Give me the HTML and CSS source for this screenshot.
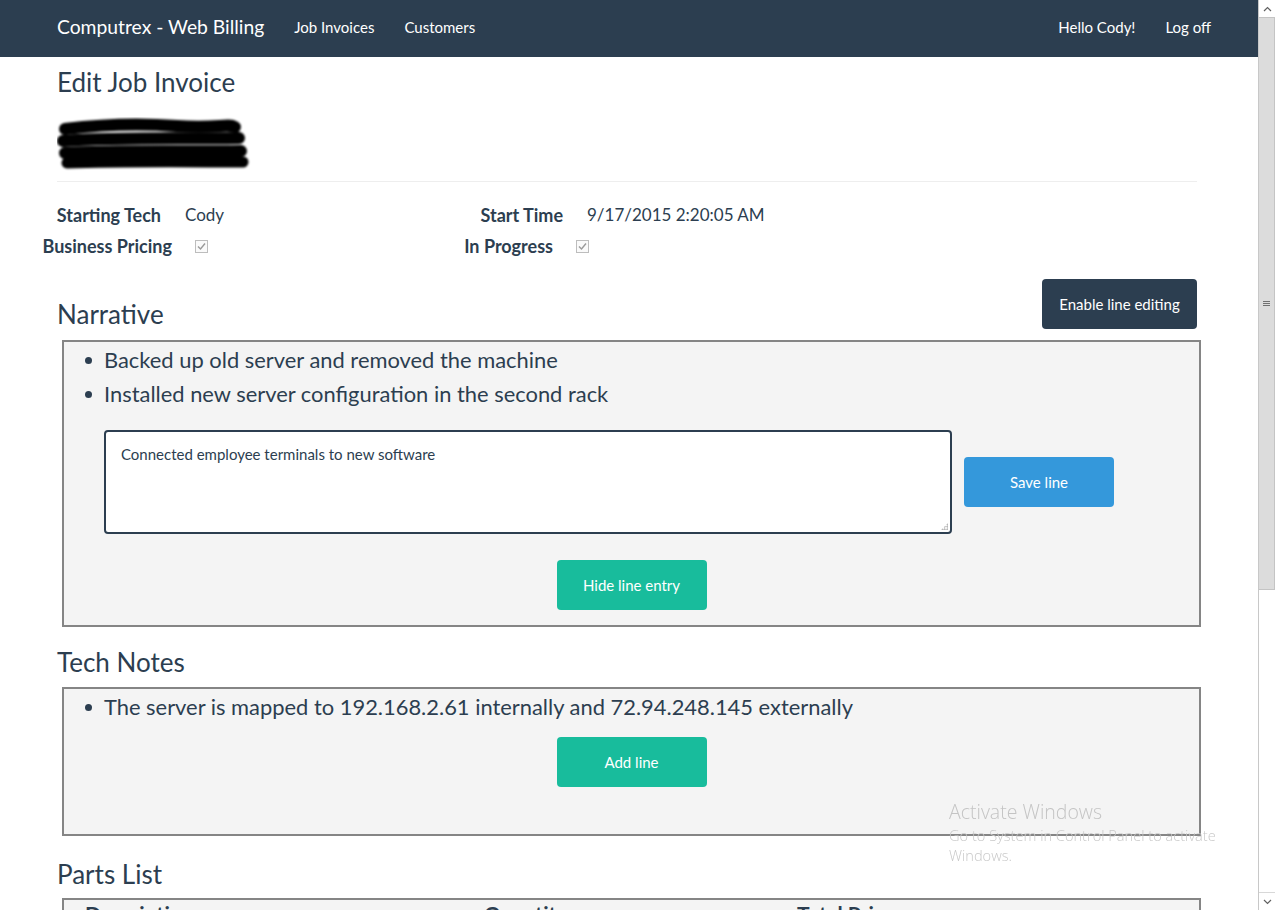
FILE: index.html
```html
<!DOCTYPE html>
<html>
<head>
<meta charset="utf-8">
<title>Edit Job Invoice</title>
<link rel="stylesheet" href="styles.css">
</head>
<body>
<div class="app">
  <div class="page">
    <nav class="navbar">
      <div class="nav-inner">
        <a class="brand">Computrex - Web Billing</a>
        <a class="nav-link">Job Invoices</a>
        <a class="nav-link">Customers</a>
        <span class="nav-spacer"></span>
        <a class="nav-link">Hello Cody!</a>
        <a class="nav-link">Log off</a>
      </div>
    </nav>
    <main class="container">
      <h2 class="page-title">Edit Job Invoice</h2>
      <div class="redacted">
        <svg width="200" height="60" viewBox="0 0 200 60">
          <defs><filter id="b" x="-10%" y="-30%" width="120%" height="160%"><feGaussianBlur stdDeviation="1.2"/></filter></defs>
          <g stroke="#000" stroke-linecap="round" fill="none" filter="url(#b)">
            <path d="M8 12 C 40 8, 80 6, 120 9 S 170 6, 178 10" stroke-width="12"/>
            <path d="M6 24 C 60 20, 120 22, 182 21" stroke-width="12"/>
            <path d="M8 36 C 60 33, 130 35, 184 34" stroke-width="12"/>
            <path d="M10 46 C 70 44, 140 45, 186 45" stroke-width="11"/>
          </g>
        </svg>
      </div>
      <hr class="divider">
      <div class="info-row info-row--first">
        <span class="info-label">Starting Tech</span>
        <span class="info-value">Cody</span>
        <span class="info-label">Start Time</span>
        <span class="info-value">9/17/2015 2:20:05 AM</span>
      </div>
      <div class="info-row info-row--second">
        <span class="info-label">Business Pricing</span>
        <span class="info-value"><span class="checkbox"><svg width="9" height="9" viewBox="0 0 9 9"><path d="M1 4.6 L3.5 7 L8 1.5" fill="none" stroke="#9a9a9a" stroke-width="1.4"/></svg></span></span>
        <span class="info-label">In Progress</span>
        <span class="info-value"><span class="checkbox"><svg width="9" height="9" viewBox="0 0 9 9"><path d="M1 4.6 L3.5 7 L8 1.5" fill="none" stroke="#9a9a9a" stroke-width="1.4"/></svg></span></span>
      </div>

      <div class="section-head">
        <h3 class="section-title">Narrative</h3>
        <button class="btn btn-primary">Enable line editing</button>
      </div>
      <section class="line-box line-box--narrative">
        <ul class="lines">
          <li>Backed up old server and removed the machine</li>
          <li>Installed new server configuration in the second rack</li>
        </ul>
        <div class="entry-row">
          <div class="textarea">Connected employee terminals to new software<span class="resize-grip"></span></div>
          <button class="btn btn-info">Save line</button>
        </div>
        <div class="center-row">
          <button class="btn btn-success">Hide line entry</button>
        </div>
      </section>

      <div class="section-head section-head--plain">
        <h3 class="section-title">Tech Notes</h3>
      </div>
      <section class="line-box line-box--notes">
        <ul class="lines">
          <li>The server is mapped to 192.168.2.61 internally and 72.94.248.145 externally</li>
        </ul>
        <div class="center-row center-row--tight">
          <button class="btn btn-success">Add line</button>
        </div>
      </section>

      <div class="section-head section-head--plain section-head--parts">
        <h3 class="section-title">Parts List</h3>
      </div>
      <section class="line-box line-box--parts">
        <div class="parts-header">
          <span class="col-desc">Description</span>
          <span class="col-qty">Quantity</span>
          <span class="col-price">Total Price</span>
        </div>
      </section>
    </main>
  </div>
  <div class="scrollbar">
    <div class="sb-arrow"><svg width="9" height="6" viewBox="0 0 9 6"><path d="M1 5 L4.5 1.5 L8 5" fill="none" stroke="#606060" stroke-width="1.2"/></svg></div>
    <div class="sb-thumb"><span class="grip"></span></div>
    <div class="sb-track"></div>
    <div class="sb-arrow"><svg width="9" height="6" viewBox="0 0 9 6"><path d="M1 1 L4.5 4.5 L8 1" fill="none" stroke="#606060" stroke-width="1.2"/></svg></div>
  </div>
</div>
<div class="watermark">
  <div class="wm-title">Activate Windows</div>
  <div class="wm-sub">Go to System in Control Panel to activate<br>Windows.</div>
</div>
</body>
</html>
```

FILE: styles.css
```css
html, body {
  margin: 0;
  padding: 0;
  overflow: hidden;
  height: 910px;
}
body {
  font-family: Lato, "Open Sans", "Liberation Sans", sans-serif;
  color: #2c3e50;
  background: #fff;
}
.app {
  display: flex;
  height: 910px;
}
.page {
  width: 1258px;
  height: 910px;
  overflow: hidden;
  flex: none;
}

/* navbar */
.navbar {
  background: #2c3e50;
  height: 57px;
}
.nav-inner {
  width: 1170px;
  margin: 0 auto;
  box-sizing: border-box;
  padding: 0 3px 4px 13px;
  display: flex;
  align-items: center;
  height: 57px;
  gap: 30px;
}
.navbar a {
  color: #fff;
  text-decoration: none;
}
.brand {
  font-size: 19.3px;
}
.nav-link {
  font-size: 15px;
}
.nav-spacer {
  flex: 1;
}

/* container */
.container {
  width: 1170px;
  margin: 0 auto;
  box-sizing: border-box;
  padding: 0 17px 0 13px;
}
.page-title {
  font-size: 26px;
  font-weight: 400;
  line-height: 29px;
  margin: 11px 0 0 0;
}
.redacted {
  margin-top: 20px;
  height: 55px;
  line-height: 0;
}
.divider {
  border: 0;
  border-top: 1px solid #eee;
  margin: 9px 0 0 0;
}

/* info rows */
.info-row {
  display: grid;
  align-items: center;
  height: 31px;
  margin-left: -18px;
  font-size: 17px;
}
.info-row--first {
  margin-top: 17px;
  grid-template-columns: 122px 224px 178px auto;
}
.info-row--second {
  grid-template-columns: 133px 223px 158px auto;
}
.info-label {
  font-weight: 700;
  font-size: 18px;
  text-align: right;
  white-space: nowrap;
}
.info-value {
  padding-left: 24px;
  white-space: nowrap;
  display: flex;
  align-items: center;
}
.info-row--second .info-value {
  padding-left: 23px;
}
.checkbox {
  width: 11px;
  height: 11px;
  border: 1px solid #bdbdbd;
  background: #fafafa;
  display: inline-flex;
  align-items: center;
  justify-content: center;
  margin-top: 1px;
}

/* sections */
.section-head {
  display: flex;
  justify-content: space-between;
  align-items: flex-end;
  margin-top: 18px;
  margin-bottom: 11px;
}
.section-head--plain {
  margin-top: 21px;
  margin-bottom: 10px;
}
.section-head--parts {
  margin-top: 24px;
  margin-bottom: 9px;
}
.section-title {
  font-size: 26px;
  font-weight: 400;
  line-height: 29px;
  margin: 0;
}
.btn {
  font-family: Lato, "Open Sans", "Liberation Sans", sans-serif;
  font-size: 15px;
  color: #fff;
  border: 0;
  border-radius: 4px;
  height: 50px;
  padding: 0;
  cursor: pointer;
}
.btn-primary {
  background: #2c3e50;
  width: 155px;
}
.btn-info {
  background: #3498db;
  width: 150px;
}
.btn-success {
  background: #18bc9c;
  width: 150px;
}

.line-box {
  border: 2px solid #858585;
  background: #f4f4f4;
  margin: 0 -4px 0 5px;
  box-sizing: border-box;
}
.line-box--narrative {
  padding: 1px 0 15px;
}
.line-box--notes {
  padding: 1px 0 47px;
}
.line-box--parts {
  padding: 0;
  height: 40px;
}
.lines {
  margin: 0;
  padding-left: 40px;
  font-size: 21.9px;
  line-height: 34px;
  list-style: none;
}
.lines li {
  position: relative;
}
.lines li::before {
  content: "";
  position: absolute;
  left: -19px;
  top: 14px;
  width: 7px;
  height: 7px;
  border-radius: 50%;
  background: #2c3e50;
}
.entry-row {
  display: flex;
  align-items: center;
  gap: 12px;
  margin: 19px 0 0 40px;
}
.textarea {
  position: relative;
  width: 848px;
  height: 104px;
  box-sizing: border-box;
  border: 2px solid #2c3e50;
  border-radius: 4px;
  background: #fff;
  padding: 12px 15px;
  font-size: 15px;
  line-height: 20px;
  color: #2c3e50;
}
.resize-grip {
  position: absolute;
  right: 2px;
  bottom: 2px;
  width: 7px;
  height: 7px;
  background:
    radial-gradient(circle, #aaa 0.8px, transparent 1px) 0 0 / 2.5px 2.5px;
  clip-path: polygon(100% 0, 100% 100%, 0 100%);
}
.btn-info {
  margin-top: -1px;
}
.center-row {
  display: flex;
  justify-content: center;
  margin-top: 26px;
}
.center-row--tight {
  margin-top: 13px;
}
.parts-header {
  display: flex;
  font-size: 21px;
  font-weight: 700;
  line-height: 22px;
  padding-left: 21px;
  padding-top: 3px;
}
.col-desc { width: 399px; }
.col-qty { width: 313px; }

/* scrollbar */
.scrollbar {
  width: 17px;
  height: 910px;
  flex: none;
  display: flex;
  flex-direction: column;
  background: #fff;
  box-sizing: border-box;
  border-left: 1px solid #c8c8c8;
}
.sb-arrow {
  height: 17px;
  display: flex;
  align-items: center;
  justify-content: center;
  flex: none;
}
.sb-thumb {
  height: 573px;
  flex: none;
  background: #dcdcdc;
  border: 1px solid #c4c4c4;
  border-left: 0;
  box-sizing: border-box;
  display: flex;
  align-items: center;
  justify-content: center;
}
.grip {
  width: 7px;
  height: 5px;
  border-top: 1px solid #707070;
  border-bottom: 1px solid #707070;
  position: relative;
  box-sizing: border-box;
}
.grip::after {
  content: "";
  position: absolute;
  left: 0;
  right: 0;
  top: 1px;
  border-top: 1px solid #707070;
}
.sb-track {
  flex: 1;
  border-bottom: 1px solid #d8d8d8;
}

/* watermark overlay */
.watermark {
  position: fixed;
  left: 949px;
  top: 799px;
  color: #c4c4c4;
  font-family: "Open Sans", "Noto Sans", sans-serif;
  font-weight: 300;
}
.wm-title {
  font-size: 19.5px;
  line-height: 26px;
}
.wm-sub {
  font-size: 14.6px;
  line-height: 20px;
  color: #c8c8c8;
}
```
